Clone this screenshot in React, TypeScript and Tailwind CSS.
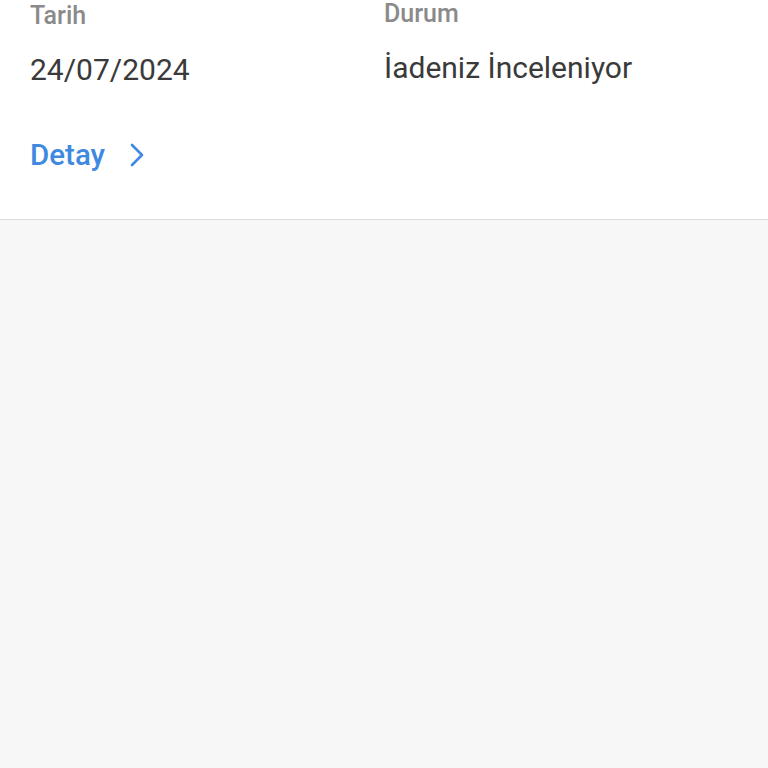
import React from "react";

export default function App() {
  return (
    <div className="min-h-[768px] w-full bg-[#f7f7f7]" style={{ fontFamily: "Roboto, 'Noto Sans', sans-serif" }}>
      <div className="bg-white border-b border-[#dcdcdc] px-[30px] pt-[1px] pb-[47px]">
        <div className="grid grid-cols-2">
          <div className="flex flex-col">
            <span className="text-[25px] leading-[30px] font-medium text-[#8a8a8a]">Tarih</span>
            <span className="mt-[22px] text-[30px] leading-[34px] text-[#3a3a3a]">24/07/2024</span>
          </div>
          <div className="flex flex-col -mt-[2px]">
            <span className="text-[25px] leading-[30px] font-medium text-[#8a8a8a]">Durum</span>
            <span className="mt-[22px] text-[30px] leading-[34px] text-[#3a3a3a]">İadeniz İnceleniyor</span>
          </div>
        </div>
        <div className="mt-[51px] flex items-center gap-[23px]">
          <span className="text-[29.5px] leading-[34px] font-medium text-[#3f8ae0]">Detay</span>
          <svg width="18" height="24" viewBox="0 0 18 24" fill="none">
            <path d="M4 2 L14 12 L4 22" stroke="#3f8ae0" strokeWidth="2.6" strokeLinecap="round" strokeLinejoin="round" />
          </svg>
        </div>
      </div>
    </div>
  );
}
